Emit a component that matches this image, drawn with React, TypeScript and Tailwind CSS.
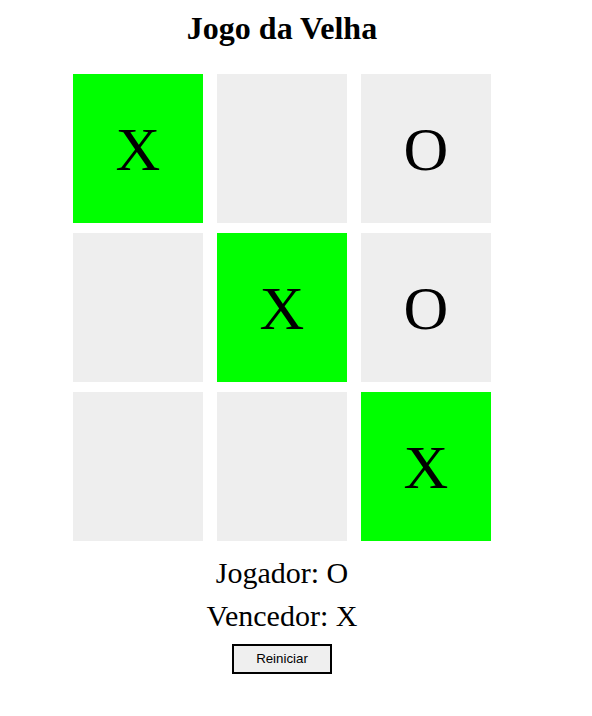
import React from 'react';

const board = ['X', '', 'O', '', 'X', 'O', '', '', 'X'];
const winLine = [0, 4, 8];

export default function App() {
  return (
    <div className="w-[564px] flex flex-col items-center font-['Liberation_Serif',serif] text-black bg-white min-h-[716px]">
      <h1 className="mt-[10px] h-[37px] leading-[37px] text-[32px] font-bold">Jogo da Velha</h1>
      <div className="mt-[27px] grid grid-cols-[130px_130px_130px] gap-x-[14px] gap-y-[10px]">
        {board.map((v, i) => (
          <div
            key={i}
            className={`h-[149px] flex items-center justify-center text-[62px] leading-none ${
              winLine.includes(i) ? 'bg-[#00ff00]' : 'bg-[#eeeeee]'
            }`}
          >
            {v}
          </div>
        ))}
      </div>
      <p className="mt-[12px] text-[30px] leading-[40px]">Jogador: O</p>
      <p className="mt-[3px] text-[30px] leading-[40px]">Vencedor: X</p>
      <button className="mt-[8px] w-[100px] h-[30px] border-2 border-black bg-[#efefef] text-[13.3px] font-['Liberation_Sans',sans-serif]">
        Reiniciar
      </button>
    </div>
  );
}
